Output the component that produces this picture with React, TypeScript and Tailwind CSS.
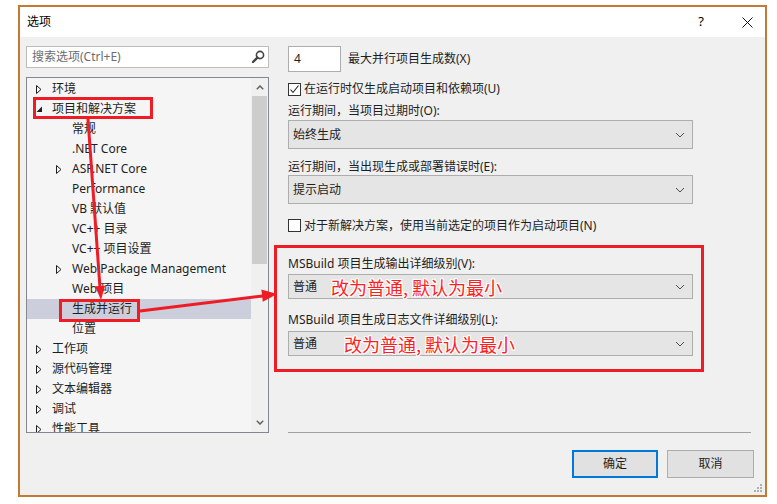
import type { ReactNode } from "react"

const FONT = { fontFamily: '"Noto Sans", "Noto Sans CJK SC", sans-serif' }
const CJK = { fontFamily: '"Noto Sans CJK SC", "Noto Sans", sans-serif' }

type Node = { label: string; level: 0 | 1; arrow?: "closed" | "open"; selected?: boolean }

const tree: Node[] = [
  { label: "环境", level: 0, arrow: "closed" },
  { label: "项目和解决方案", level: 0, arrow: "open" },
  { label: "常规", level: 1 },
  { label: ".NET Core", level: 1 },
  { label: "ASP.NET Core", level: 1, arrow: "closed" },
  { label: "Performance", level: 1 },
  { label: "VB 默认值", level: 1 },
  { label: "VC++ 目录", level: 1 },
  { label: "VC++ 项目设置", level: 1 },
  { label: "Web Package Management", level: 1, arrow: "closed" },
  { label: "Web 项目", level: 1 },
  { label: "生成并运行", level: 1, selected: true },
  { label: "位置", level: 1 },
  { label: "工作项", level: 0, arrow: "closed" },
  { label: "源代码管理", level: 0, arrow: "closed" },
  { label: "文本编辑器", level: 0, arrow: "closed" },
  { label: "调试", level: 0, arrow: "closed" },
  { label: "性能工具", level: 0, arrow: "closed" },
]

function Arrow({ kind }: { kind: "closed" | "open" }) {
  if (kind === "open") {
    return (
      <svg width="7" height="7" viewBox="0 0 7 7">
        <path d="M6 0.5 L6 6 L0.5 6 Z" fill="#1e1e1e" />
      </svg>
    )
  }
  return (
    <svg width="6" height="9" viewBox="0 0 6 9">
      <path d="M0.5 0.5 L5 4.5 L0.5 8.5 Z" fill="none" stroke="#1e1e1e" strokeWidth="1" />
    </svg>
  )
}

function TreeRow({ node }: { node: Node }) {
  const arrowLeft = node.level === 0 ? "pl-[9px]" : "pl-[29px]"
  return (
    <div
      className={`h-[20px] flex items-center text-[12px] text-[#1e1e1e] ${arrowLeft} ${
        node.selected ? "bg-[#cccedb]" : ""
      }`}
    >
      <div className="w-[14px] flex items-center">{node.arrow && <Arrow kind={node.arrow} />}</div>
      <span className="ml-[2px] whitespace-nowrap">{node.label}</span>
    </div>
  )
}

function Chevron() {
  return (
    <svg width="10" height="6" viewBox="0 0 10 6">
      <path d="M1 1 L5 5 L9 1" fill="none" stroke="#505050" strokeWidth="1" />
    </svg>
  )
}

function Select({ value, h, note }: { value: string; h: string; note?: ReactNode }) {
  return (
    <div className={`w-[405px] ${h} border border-[#adadad] bg-[#e5e5e5] flex items-center pl-[4px] pr-[7px] text-[12px] text-[#1e1e1e]`}>
      <span className="min-w-[38px] shrink-0 whitespace-nowrap">{value}</span>
      {note}
      <div className="ml-auto">
        <Chevron />
      </div>
    </div>
  )
}

function Note({ offset }: { offset: string }) {
  return (
    <span
      className={`${offset} text-[18px] leading-none text-[#ff1f1f] whitespace-nowrap`}
      style={{
        ...CJK,
        textShadow:
          "1px 0 0 #fff, -1px 0 0 #fff, 0 1px 0 #fff, 0 -1px 0 #fff, 1px 1px 0 #fff, -1px -1px 0 #fff, 1px -1px 0 #fff, -1px 1px 0 #fff",
      }}
    >
      改为普通, 默认为最小
    </span>
  )
}

function CheckBox({ checked }: { checked?: boolean }) {
  return (
    <div className="w-[13px] h-[13px] border border-[#333333] bg-white flex items-center justify-center shrink-0">
      {checked && (
        <svg width="11" height="11" viewBox="0 0 11 11">
          <path d="M1.5 5.5 L4 8.5 L9.5 1.5" fill="none" stroke="#222" strokeWidth="1.1" />
        </svg>
      )}
    </div>
  )
}

function Annotations() {
  return (
    <svg className="absolute left-0 top-0 pointer-events-none" width="777" height="504" viewBox="0 0 777 504">
      <g fill="none" stroke="#ee1c25" strokeWidth="3">
        <rect x="34.5" y="98.5" width="117" height="19" />
        <rect x="60.5" y="300.5" width="78" height="20" />
        <line x1="88" y1="119" x2="100" y2="288" />
        <line x1="140" y1="311" x2="263" y2="296" />
      </g>
      <g fill="#ee1c25">
        <path d="M101 300 L105.1 285.7 L95.1 286.3 Z" />
        <path d="M277 294 L262.8 301.8 L261.4 289.6 Z" />
      </g>
    </svg>
  )
}

export default function App() {
  return (
    <div className="relative w-[777px] h-[504px] bg-white overflow-hidden pl-[18px] pt-[5px]" style={FONT}>
      <div className="w-[749px] h-[492px] border-2 border-[#c47a35] flex flex-col">
        {/* Title bar */}
        <div className="h-[30px] bg-white flex items-center pl-[7px] text-[12px] text-black">
          <span>选项</span>
          <span className="ml-auto text-[13px]">?</span>
          <div className="ml-[38px] mr-[12px]">
            <svg width="11" height="11" viewBox="0 0 11 11">
              <path d="M0.5 0.5 L10.5 10.5 M10.5 0.5 L0.5 10.5" stroke="#111" strokeWidth="1" />
            </svg>
          </div>
        </div>

        {/* Body */}
        <div className="relative flex-1 bg-[#f0f0f0] flex pl-[6px] gap-[19px]">
          {/* Left column */}
          <div className="w-[243px] pt-[9px] flex flex-col">
            <div className="h-[22px] border border-[#bdbdbd] bg-white flex items-center pl-[5px] pr-[3px] text-[12px] text-[#6d6d6d]">
              <span>搜索选项(Ctrl+E)</span>
              <svg className="ml-auto" width="14" height="14" viewBox="0 0 14 14">
                <circle cx="9" cy="5" r="3.6" fill="none" stroke="#444" strokeWidth="1.6" />
                <path d="M6.4 7.6 L2 12" stroke="#444" strokeWidth="2.4" strokeLinecap="round" />
              </svg>
            </div>
            <div className="mt-[9px] h-[356px] border border-[#828790] bg-[#f5f5f5] flex overflow-hidden">
              <div className="flex-1 pt-[1px]">
                {tree.map((n) => (
                  <TreeRow key={n.label} node={n} />
                ))}
              </div>
              <div className="w-[17px] bg-[#f0f0f0] flex flex-col">
                <div className="h-[18px] flex items-center justify-center">
                  <svg width="8" height="5" viewBox="0 0 8 5">
                    <path d="M0.8 4.2 L4 1 L7.2 4.2" fill="none" stroke="#606060" strokeWidth="1.5" />
                  </svg>
                </div>
                <div className="h-[168px] mx-[1px] bg-[#cdcdcd]" />
                <div className="flex-1" />
                <div className="h-[20px] flex items-center justify-center">
                  <svg width="8" height="5" viewBox="0 0 8 5">
                    <path d="M0.8 0.8 L4 4 L7.2 0.8" fill="none" stroke="#606060" strokeWidth="1.5" />
                  </svg>
                </div>
              </div>
            </div>
          </div>

          {/* Right column */}
          <div className="w-[466px] pt-[9px] flex flex-col text-[12px] text-[#1e1e1e]">
            <div className="h-[26px] flex items-center">
              <div className="w-[53px] h-[26px] border border-[#adadad] bg-white flex items-center pl-[5px]">4</div>
              <span className="ml-[7px]">最大并行项目生成数(X)</span>
            </div>

            <div className="mt-[7px] h-[20px] flex items-center">
              <CheckBox checked />
              <span className="ml-[3px]">在运行时仅生成启动项目和依赖项(U)</span>
            </div>

            <div className="mt-[3px] h-[18px] flex items-center">运行期间，当项目过期时(O):</div>
            <Select value="始终生成" h="h-[29px]" />

            <div className="mt-[10px] h-[16px] flex items-center">运行期间，当出现生成或部署错误时(E):</div>
            <Select value="提示启动" h="h-[29px]" />

            <div className="mt-[12px] h-[19px] flex items-center">
              <CheckBox />
              <span className="ml-[3px]">对于新解决方案，使用当前选定的项目作为启动项目(N)</span>
            </div>

            {/* Highlighted MSBuild section */}
            <div className="mt-[10px] ml-[-14px] w-[430px] border-[3px] border-[#ee1c25] pl-[11px] pt-[8px] pb-[13px]">
              <div className="h-[16px] flex items-center">MSBuild 项目生成输出详细级别(V):</div>
              <div className="mt-[2px]">
                <Select value="普通" h="h-[25px]" note={<Note offset="ml-0" />} />
              </div>
              <div className="mt-[13px] h-[16px] flex items-center">MSBuild 项目生成日志文件详细级别(L):</div>
              <div className="mt-[3px]">
                <Select value="普通" h="h-[25px]" note={<Note offset="ml-[13px]" />} />
              </div>
            </div>

            <div className="mt-[60px] w-[463px] h-px bg-[#a0a0a0]" />

            <div className="mt-[17px] flex gap-[9px] ml-[284px]">
              <button className="w-[86px] h-[28px] border-2 border-[#0078d7] bg-[#e1e1e1] text-[12px]">确定</button>
              <button className="w-[87px] h-[28px] border border-[#adadad] bg-[#e1e1e1] text-[12px]">取消</button>
            </div>
          </div>

          {/* Resize grip */}
          <svg className="absolute right-[2px] bottom-[2px]" width="9" height="9" viewBox="0 0 9 9">
            <g fill="#b0b0b0">
              <rect x="6" y="0" width="2" height="2" />
              <rect x="3" y="3" width="2" height="2" />
              <rect x="6" y="3" width="2" height="2" />
              <rect x="0" y="6" width="2" height="2" />
              <rect x="3" y="6" width="2" height="2" />
              <rect x="6" y="6" width="2" height="2" />
            </g>
          </svg>
        </div>
      </div>
      <Annotations />
    </div>
  )
}
